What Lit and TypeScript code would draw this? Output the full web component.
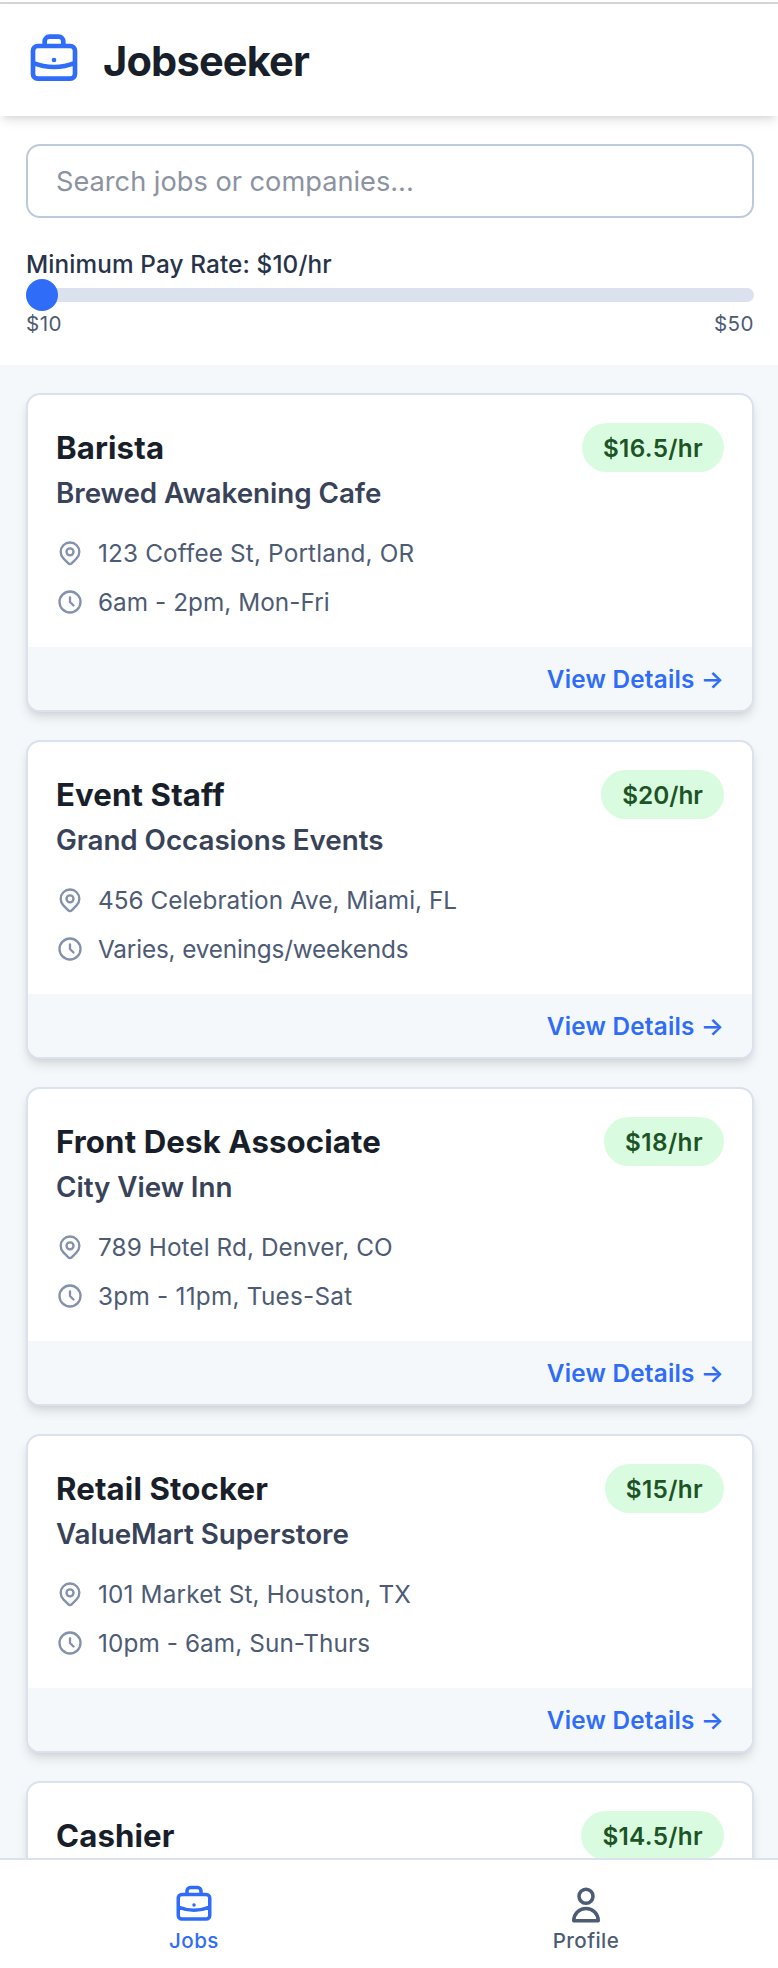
import { LitElement, html, css, svg, nothing } from "lit";
import { customElement, property, state } from "lit/decorators.js";
import { styleMap } from "lit/directives/style-map.js";

/** A text with its letter-spacing in pixels. */
type Tracked = [text: string, tracking: number];

interface Job {
  title: string;
  pay: Tracked;
  company?: string;
  place?: Tracked;
  hours?: Tracked;
}

const JOBS: Job[] = [
  { title: "Barista", pay: ["16.5", 0.33], company: "Brewed Awakening Cafe", place: ["123 Coffee St, Portland, OR", 0.16], hours: ["6am - 2pm, Mon-Fri", 0.05] },
  { title: "Event Staff", pay: ["20", 0], company: "Grand Occasions Events", place: ["456 Celebration Ave, Miami, FL", 0.02], hours: ["Varies, evenings/weekends", -0.16] },
  { title: "Front Desk Associate", pay: ["18", 0.45], company: "City View Inn", place: ["789 Hotel Rd, Denver, CO", 0.1], hours: ["3pm - 11pm, Tues-Sat", 0.25] },
  { title: "Retail Stocker", pay: ["15", 0.35], company: "ValueMart Superstore", place: ["101 Market St, Houston, TX", 0.17], hours: ["10pm - 6am, Sun-Thurs", 0.1] },
  { title: "Cashier", pay: ["14.5", 0.33] },
];

const ICONS = {
  briefcase: svg`<path d="M21 13.255A23.931 23.931 0 0112 15c-3.183 0-6.22-.62-9-1.745M16 6V4a2 2 0 00-2-2h-4a2 2 0 00-2 2v2m4 6h.01M5 20h14a2 2 0 002-2V8a2 2 0 00-2-2H5a2 2 0 00-2 2v10a2 2 0 002 2z"/>`,
  user: svg`<path d="M16 7a4 4 0 11-8 0 4 4 0 018 0zM12 14a7 7 0 00-7 7h14a7 7 0 00-7-7z"/>`,
  pin: svg`<path d="M17.657 16.657L13.414 20.9a1.998 1.998 0 01-2.827 0l-4.244-4.243a8 8 0 1111.314 0z"/><path d="M15 11a3 3 0 11-6 0 3 3 0 016 0z"/>`,
  clock: svg`<path d="M12 8v4l3 3m6-3a9 9 0 11-18 0 9 9 0 0118 0z"/>`,
};

@customElement("line-icon")
export class LineIcon extends LitElement {
  @property() name: keyof typeof ICONS = "briefcase";
  static styles = css`
    :host { display: block; flex: none; }
    svg {
      display: block; width: 100%; height: 100%;
      fill: none; stroke: currentColor; stroke-width: 2;
      stroke-linecap: round; stroke-linejoin: round;
    }
  `;
  render() {
    return html`<svg viewBox="0 0 24 24">${ICONS[this.name]}</svg>`;
  }
}

@customElement("job-card")
export class JobCard extends LitElement {
  @property({ attribute: false }) job!: Job;
  static styles = css`
    :host {
      display: block; box-sizing: border-box; height: 319px; flex: none;
      background: #fff; border: 2px solid #dbe1ed; border-radius: 14px; overflow: hidden;
      box-shadow: 0 7px 10.5px -1.75px rgba(0, 0, 0, 0.1), 0 3.5px 7px -3.5px rgba(0, 0, 0, 0.1);
    }
    .body { height: 252px; box-sizing: border-box; padding: 28px 28px 27px; }
    .top { display: flex; justify-content: space-between; align-items: flex-start; }
    .title { font-size: 31.2px; line-height: 51px; height: 49px; font-weight: 700; color: #181f2b; letter-spacing: 0.12px; }
    .company { font-size: 27.8px; line-height: 42px; height: 42px; font-weight: 600; color: #38435a; letter-spacing: -0.05px; }
    .pay {
      height: 49px; line-height: 51px; padding: 0 21px; border-radius: 25px;
      background: #d9fce1; color: #1d5425; font-size: 24.3px; font-weight: 600;
    }
    .rows { display: grid; gap: 14px; margin-top: 22px; }
    .row { display: flex; align-items: center; gap: 14px; height: 35px; font-size: 24.3px; color: #4d5b74; }
    .row span { margin-bottom: 2px; }
    .row line-icon { width: 28px; height: 28px; margin-bottom: 1px; color: #8391aa; }
    .foot {
      height: 63px; box-sizing: border-box; padding: 1px 28px 0; display: flex;
      align-items: center; justify-content: flex-end; background: #f5f8fb;
    }
    .link { font-size: 24.3px; font-weight: 600; color: #2f6df9; white-space: pre; }
    .words { letter-spacing: 0.22px; }
  `;

  private row(icon: string, [text, tracking]: Tracked) {
    return html`<div class="row">
      <line-icon name=${icon}></line-icon>
      <span style=${styleMap({ letterSpacing: `${tracking}px` })}>${text}</span>
    </div>`;
  }

  render() {
    const j = this.job;
    return html`
      <div class="body">
        <div class="top">
          <div>
            <div class="title">${j.title}</div>
            ${j.company ? html`<div class="company">${j.company}</div>` : nothing}
          </div>
          <div class="pay" style=${styleMap({ letterSpacing: `${j.pay[1]}px` })}>$${j.pay[0]}/hr</div>
        </div>
        ${j.place && j.hours
          ? html`<div class="rows">${this.row("pin", j.place)}${this.row("clock", j.hours)}</div>`
          : nothing}
      </div>
      ${j.company
        ? html`<div class="foot"><span class="link"><span class="words">View Details</span> →</span></div>`
        : nothing}
    `;
  }
}

@customElement("app-root")
export class AppRoot extends LitElement {
  @state() private rate = 10;
  static styles = css`
    :host {
      display: flex; flex-direction: column; height: 1968px; overflow: hidden;
      background: #fff; font-family: Inter, "Liberation Sans", sans-serif;
    }
    .rule { flex: none; height: 2px; margin-top: 2px; background: #d5d5d7; }
    header {
      flex: none; height: 112px; box-sizing: border-box; padding: 0 26px;
      display: flex; align-items: center; gap: 21px; background: #fff;
      position: relative; z-index: 2;
      box-shadow: 0 7px 10.5px -1.75px rgba(0, 0, 0, 0.1), 0 3.5px 7px -3.5px rgba(0, 0, 0, 0.1);
    }
    header line-icon { width: 56px; height: 56px; color: #2f6df9; }
    h1 { margin: 2px 0 0; font-size: 41.5px; line-height: 56px; font-weight: 700; color: #181f2b; letter-spacing: -0.8px; }
    .filters { flex: none; height: 249px; box-sizing: border-box; padding: 28px 24px 0 26px; }
    .search {
      display: block; width: 100%; height: 74px; box-sizing: border-box; margin: 0; padding: 0 28px;
      border: 2px solid #bccadb; border-radius: 14px; background: #fff; outline: none;
      font: 400 27.2px Inter, sans-serif; color: #181f2b;
    }
    .search::placeholder { color: #8b93a2; opacity: 1; }
    label {
      display: block; margin-top: 28px; height: 33px; line-height: 37px;
      font-size: 24.3px; font-weight: 500; color: #27334a; letter-spacing: 0.13px;
    }
    .range {
      -webkit-appearance: none; appearance: none; display: block; width: 100%; height: 32px;
      margin: 0; background: transparent;
    }
    .range::-webkit-slider-runnable-track { height: 14px; border-radius: 7px; background: #dbe1ed; }
    .range::-webkit-slider-thumb {
      -webkit-appearance: none; width: 32px; height: 32px; margin-top: -9px;
      border-radius: 50%; background: #2f6df9;
    }
    .ends { display: flex; justify-content: space-between; line-height: 26px; font-size: 20.6px; color: #4d5b74; letter-spacing: 0.45px; }
    main {
      flex: 1; min-height: 0; overflow: hidden; box-sizing: border-box; padding: 28px 24px 0 26px;
      display: flex; flex-direction: column; gap: 28px; background: #f5f8fb;
    }
    nav {
      flex: none; height: 110px; box-sizing: border-box; border-top: 2px solid #dbe1ed;
      display: grid; grid-template-columns: 388px 1fr; background: #fff;
    }
    .tab {
      display: flex; flex-direction: column; align-items: center; padding-top: 24px;
      font-size: 20.6px; line-height: 30px; font-weight: 500; color: #4d5b74; letter-spacing: 0.42px;
    }
    .tab line-icon { width: 42px; height: 42px; }
    .tab.active { color: #2f6df9; }
    .tab.profile { padding-left: 6px; }
  `;
  render() {
    return html`
      <div class="rule"></div>
      <header><line-icon name="briefcase"></line-icon><h1>Jobseeker</h1></header>
      <section class="filters">
        <input class="search" placeholder="Search jobs or companies..." />
        <label for="rate">Minimum Pay Rate: $${this.rate}/hr</label>
        <input id="rate" class="range" type="range" min="10" max="50" .value=${String(this.rate)}
          @input=${(e: Event) => (this.rate = Number((e.target as HTMLInputElement).value))} />
        <div class="ends"><span>$10</span><span>$50</span></div>
      </section>
      <main>${JOBS.map((j) => html`<job-card .job=${j}></job-card>`)}</main>
      <nav>
        <div class="tab active"><line-icon name="briefcase"></line-icon><span>Jobs</span></div>
        <div class="tab profile"><line-icon name="user"></line-icon><span>Profile</span></div>
      </nav>
    `;
  }
}
